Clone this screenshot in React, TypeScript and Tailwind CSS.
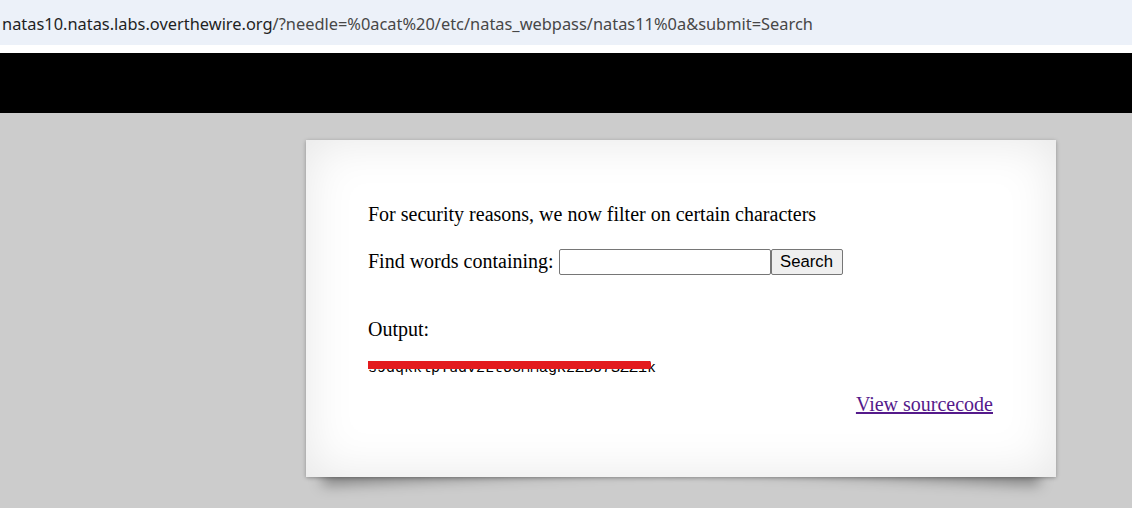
import React from "react";

export default function App() {
  return (
    <div className="w-[1132px] h-[508px] overflow-hidden bg-[#cccccc] flex flex-col">
      <div className="h-[45px] bg-[#ecf1f9] flex items-center pl-[2px] pt-[4px] text-[16.4px] font-['Noto_Sans',sans-serif] whitespace-nowrap">
        <span className="text-[#1f1f1f]">natas10.natas.labs.overthewire.org</span>
        <span className="text-[#474747]">/?needle=%0acat%20/etc/natas_webpass/natas11%0a&amp;submit=Search</span>
      </div>
      <div className="h-[8px] bg-white" />
      <div className="h-[60px] bg-black" />
      <div className="pt-[27px] pl-[306px]">
        <div className="relative w-[750px] isolate">
          <div className="absolute bottom-[19px] left-[14px] w-[370px] h-[67px] shadow-[0_18px_14px_rgba(0,0,0,0.35)] -rotate-3 -z-10" />
          <div className="absolute bottom-[19px] right-[14px] w-[370px] h-[67px] shadow-[0_18px_14px_rgba(0,0,0,0.35)] rotate-3 -z-10" />
          <div className="relative h-[337px] bg-white shadow-[inset_0_0_50px_rgba(0,0,0,0.1),0_1px_4px_rgba(0,0,0,0.3)] pt-[63px] pl-[62px] pr-[63px] font-['Liberation_Serif',serif] text-[20px] leading-[23px] text-black flex flex-col">
            <p>For security reasons, we now filter on certain characters</p>
            <div className="mt-[23px] flex items-center h-[26px]">
              <span className="-mt-[2px]">Find words containing:</span>
              <input
                type="text"
                className="ml-[5px] w-[212px] h-[26px] border border-[#767676] rounded-[2px] bg-white outline-none"
              />
              <button className="w-[72px] h-[26px] border border-[#767676] rounded-[2px] bg-[#efefef] font-['Liberation_Sans',sans-serif] text-[16.7px] leading-none text-black">
                Search
              </button>
            </div>
            <p className="mt-[43px]">Output:</p>
            <div className="relative mt-[19px] h-[18px] font-['Liberation_Mono',monospace] text-[15px] leading-[18px]">
              <span>s9dqkklpYudv2LtU3MMagR2ZBU7SZZ1k</span>
              <div className="absolute left-0 top-[1px] w-[283px] h-[8px] bg-[#e31b1e] rounded-r-[2px]" />
            </div>
            <div className="mt-[15px] flex justify-end">
              <a href="#" className="text-[#551a8b] underline">View sourcecode</a>
            </div>
          </div>
        </div>
      </div>
    </div>
  );
}
